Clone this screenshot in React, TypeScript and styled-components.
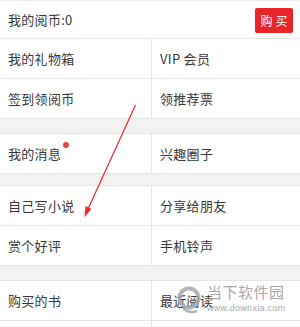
import React from "react";
import styled, { createGlobalStyle } from "styled-components";

const Global = createGlobalStyle`
  html, body { margin: 0; padding: 0; background: #fff; }
  body { font-family: "Noto Sans CJK SC", "Liberation Sans", sans-serif; }
`;

const Page = styled.div`
  position: relative;
  width: 300px;
  height: 327px;
  overflow: hidden;
  background: #fff;
  border-top: 1px solid #ececec;
  box-sizing: border-box;
`;

const TopBar = styled.div`
  height: 37px;
  display: flex;
  align-items: center;
  justify-content: space-between;
  padding: 0 7px 0 8px;
  border-bottom: 1px solid #e6e6e6;
`;

const Label = styled.span`
  font-size: 13px;
  color: #383838;
  letter-spacing: 0.3px;
`;

const BuyButton = styled.button`
  width: 38px;
  height: 25px;
  border: none;
  border-radius: 2px;
  background: #e8262a;
  color: #fff;
  font-family: inherit;
  font-size: 12px;
  letter-spacing: 3px;
  padding: 0 0 0 3px;
  margin-top: 1px;
`;

const Row = styled.div`
  display: grid;
  grid-template-columns: 151px 1fr;
  height: 39px;
  border-bottom: 1px solid #e6e6e6;
`;

const Cell = styled.div<{ $right?: boolean }>`
  position: relative;
  display: flex;
  align-items: center;
  padding-left: 8px;
  border-left: ${(p) => (p.$right ? "1px solid #e6e6e6" : "none")};
`;

const Gap = styled.div<{ $h: number }>`
  height: ${(p) => p.$h}px;
  background: #f2f2f2;
  border-bottom: 1px solid #e6e6e6;
`;

const Dot = styled.span`
  position: absolute;
  left: 63px;
  top: 8px;
  width: 6px;
  height: 6px;
  border-radius: 50%;
  background: #e8454a;
`;

const Arrow = styled.svg`
  position: absolute;
  left: 0;
  top: 0;
  pointer-events: none;
`;

const Watermark = styled.div`
  position: absolute;
  left: 177px;
  top: 282px;
  display: flex;
  align-items: center;
  gap: 6px;
  opacity: 0.85;
`;

const WmText = styled.div`
  display: flex;
  flex-direction: column;
  align-items: flex-start;
`;

const WmTitle = styled.span`
  font-size: 15px;
  line-height: 17px;
  color: #9a9a9a;
  letter-spacing: 0.5px;
`;

const WmUrl = styled.span`
  font-family: "Liberation Sans", sans-serif;
  font-size: 9px;
  line-height: 11px;
  color: #9a9a9a;
  margin-top: 3px;
  letter-spacing: 0.3px;
`;

type Item = { l: string; r: string; dot?: boolean };

const Pair = ({ l, r, dot }: Item) => (
  <Row>
    <Cell>
      <Label>{l}</Label>
      {dot && <Dot />}
    </Cell>
    <Cell $right>
      <Label>{r}</Label>
    </Cell>
  </Row>
);

export default function App() {
  return (
    <>
      <Global />
      <Page>
        <TopBar>
          <Label>我的阅币:0</Label>
          <BuyButton>购买</BuyButton>
        </TopBar>
        <Pair l="我的礼物箱" r="VIP 会员" />
        <Pair l="签到领阅币" r="领推荐票" />
        <Gap $h={14} />
        <Pair l="我的消息" r="兴趣圈子" dot />
        <Gap $h={11} />
        <Pair l="自己写小说" r="分享给朋友" />
        <Pair l="赏个好评" r="手机铃声" />
        <Gap $h={14} />
        <Pair l="购买的书" r="最近阅读" />
        <Pair l="" r="" />
        <Arrow width="300" height="327" viewBox="0 0 300 327">
          <line x1="135.5" y1="104" x2="88" y2="208" stroke="#f0262a" strokeWidth="1.2" />
          <polygon points="84.5,216 85.5,205 91.5,208" fill="#f0262a" />
        </Arrow>
        <Watermark>
          <svg width="24" height="30" viewBox="0 0 24 30">
            <circle cx="12" cy="14" r="9.5" fill="none" stroke="#a8a8a8" strokeWidth="4" />
            <path d="M6 24 Q12 30 20 27" fill="none" stroke="#a8a8a8" strokeWidth="2.5" />
          </svg>
          <WmText>
            <WmTitle>当下软件园</WmTitle>
            <WmUrl>www.downxia.com</WmUrl>
          </WmText>
        </Watermark>
      </Page>
    </>
  );
}
